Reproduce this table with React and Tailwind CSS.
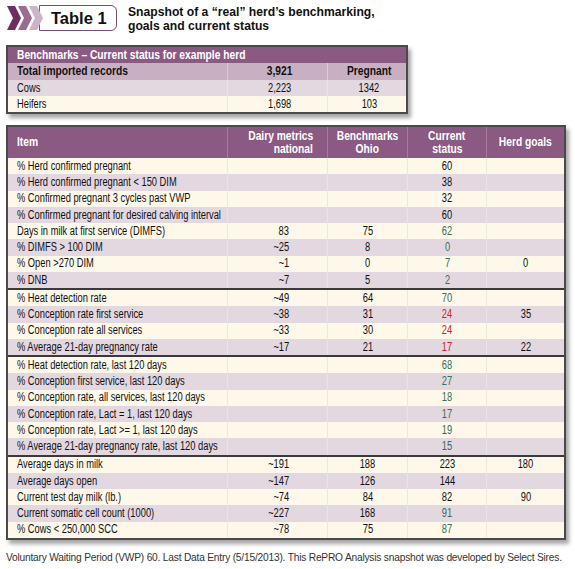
import React from "react";

const F = { fontFamily: '"Liberation Sans", Arial, sans-serif' };

const sections = [
  [
    ["% Herd confirmed pregnant", "", "", ["60", "k"], ""],
    ["% Herd confirmed pregnant < 150 DIM", "", "", ["38", "k"], ""],
    ["% Confirmed pregnant 3 cycles past VWP", "", "", ["32", "k"], ""],
    ["% Confirmed pregnant for desired calving interval", "", "", ["60", "k"], ""],
    ["Days in milk at first service (DIMFS)", "83", "75", ["62", "g"], ""],
    ["% DIMFS > 100 DIM", "~25", "8", ["0", "g"], ""],
    ["% Open >270 DIM", "~1", "0", ["7", "g"], "0"],
    ["% DNB", "~7", "5", ["2", "g"], ""],
  ],
  [
    ["% Heat detection rate", "~49", "64", ["70", "g"], ""],
    ["% Conception rate first service", "~38", "31", ["24", "r"], "35"],
    ["% Conception rate all services", "~33", "30", ["24", "r"], ""],
    ["% Average 21-day pregnancy rate", "~17", "21", ["17", "r"], "22"],
  ],
  [
    ["% Heat detection rate, last 120 days", "", "", ["68", "g"], ""],
    ["% Conception first service, last 120 days", "", "", ["27", "g"], ""],
    ["% Conception rate, all services, last 120 days", "", "", ["18", "g"], ""],
    ["% Conception rate, Lact = 1, last 120 days", "", "", ["17", "g"], ""],
    ["% Conception rate, Lact >= 1, last 120 days", "", "", ["19", "g"], ""],
    ["% Average 21-day pregnancy rate, last 120 days", "", "", ["15", "g"], ""],
  ],
  [
    ["Average days in milk", "~191", "188", ["223", "k"], "180"],
    ["Average days open", "~147", "126", ["144", "k"], ""],
    ["Current test day milk (lb.)", "~74", "84", ["82", "k"], "90"],
    ["Current somatic cell count (1000)", "~227", "168", ["91", "g"], ""],
    ["% Cows < 250,000 SCC", "~78", "75", ["87", "g"], ""],
  ],
];

const colorCls = { k: "text-[#111]", g: "text-[#35705b]", r: "text-[#d2232a]" };

// condensed text helpers (regular / bold)
const NL = ({ children }) => <span className="inline-block whitespace-nowrap origin-left scale-x-[0.745]">{children}</span>;
const NC = ({ children }) => <span className="inline-block whitespace-nowrap origin-center scale-x-[0.745]">{children}</span>;
const NR = ({ children }) => <span className="inline-block whitespace-nowrap origin-right scale-x-[0.745]">{children}</span>;
const BL = ({ children }) => <span className="inline-block whitespace-nowrap origin-left scale-x-[0.82]">{children}</span>;
const BC = ({ children }) => <span className="inline-block whitespace-nowrap origin-center scale-x-[0.82]">{children}</span>;
const BR = ({ children }) => <span className="inline-block whitespace-nowrap origin-right scale-x-[0.82]">{children}</span>;

function Row({ r, i }) {
  const odd = i % 2 === 1;
  const bg = odd ? "bg-[#e3d7e0]" : "bg-[#fdf8ea]";
  const bd = odd ? "border-[#ece3e9]" : "border-[#eee6d6]";
  return (
    <div className={`flex h-[16.25px] text-[12.5px] leading-none text-[#111] ${bg}`}>
      <div className={`w-[220px] pl-[9px] border-r ${bd} flex items-center`}><NL>{r[0]}</NL></div>
      <div className={`w-[100px] pr-[38px] border-r ${bd} flex items-center justify-end`}><NR>{r[1]}</NR></div>
      <div className={`w-[80px] border-r ${bd} flex items-center justify-center`}><NC>{r[2]}</NC></div>
      <div className={`w-[79px] border-r ${bd} flex items-center justify-center ${colorCls[r[3][1]]}`}><NC>{r[3][0]}</NC></div>
      <div className="flex-1 flex items-center justify-center"><NC>{r[4]}</NC></div>
    </div>
  );
}

export default function App() {
  return (
    <div className="w-[575px] h-[569px] bg-white relative overflow-hidden" style={F}>
      {/* Title */}
      <div className="flex items-start pt-[5px] pl-[7px]">
        <div className="flex items-center h-[26px]">
          <svg width="36" height="26" viewBox="0 0 36 26" className="-mr-[4px] relative z-10">
            <polygon points="22,1 30,1 36,13 30,25 22,25 28,13" fill="#cdb3c6" />
            <polygon points="11,1 19,1 25,13 19,25 11,25 17,13" fill="#9b6c91" />
            <polygon points="0,1 8,1 14,13 8,25 0,25 6,13" fill="#6e2c62" />
          </svg>
          <div className="h-[26px] w-[78px] border-[1.5px] border-[#7d4b73] rounded-r-[6px] bg-white flex items-center pl-[11px] font-bold text-[16.5px] text-[#111]">
            Table 1
          </div>
        </div>
        <div className="ml-[11px] font-bold text-[13.5px] text-[#111] flex flex-col">
          <span className="block h-[14px] leading-[14px] whitespace-nowrap origin-left scale-x-[0.9]">Snapshot of a “real” herd’s benchmarking,</span>
          <span className="block h-[14px] leading-[14px] whitespace-nowrap origin-left scale-x-[0.9]">goals and current status</span>
        </div>
      </div>

      {/* Top table */}
      <div className="ml-[6px] mt-[12px] w-[402px] border-2 border-[#4a4a4a] shadow-[3px_4px_4px_rgba(0,0,0,0.35)]">
        <div className="h-[16px] bg-[#8b5a82] text-white font-bold text-[12.5px] leading-none flex items-center pl-[9px]">
          <BL>Benchmarks – Current status for example herd</BL>
        </div>
        <div className="h-[17px] bg-[#c8b0c2] font-bold text-[12.5px] leading-none text-[#111] flex">
          <div className="w-[220px] pl-[9px] flex items-center border-r border-[#dccbd6]"><BL>Total imported records</BL></div>
          <div className="w-[100px] pl-[4px] flex items-center justify-center border-r border-[#dccbd6]"><BC>3,921</BC></div>
          <div className="flex-1 pl-[4px] flex items-center justify-center"><BC>Pregnant</BC></div>
        </div>
        <div className="h-[16px] bg-[#e3d7e0] text-[12.5px] leading-none text-[#111] flex">
          <div className="w-[220px] pl-[9px] flex items-center border-r border-[#ece3e9]"><NL>Cows</NL></div>
          <div className="w-[100px] pl-[4px] flex items-center justify-center border-r border-[#ece3e9]"><NC>2,223</NC></div>
          <div className="flex-1 pl-[4px] flex items-center justify-center"><NC>1342</NC></div>
        </div>
        <div className="h-[16px] bg-[#fdf8ea] text-[12.5px] leading-none text-[#111] flex">
          <div className="w-[220px] pl-[9px] flex items-center border-r border-[#eee6d6]"><NL>Heifers</NL></div>
          <div className="w-[100px] pl-[4px] flex items-center justify-center border-r border-[#eee6d6]"><NC>1,698</NC></div>
          <div className="flex-1 pl-[4px] flex items-center justify-center"><NC>103</NC></div>
        </div>
      </div>

      {/* Main table */}
      <div className="ml-[6px] mt-[11px] w-[560px] border-2 border-[#4a4a4a] shadow-[3px_4px_4px_rgba(0,0,0,0.35)]">
        <div className="h-[31px] bg-[#8b5a82] text-white font-bold text-[12.5px] leading-[13px] flex">
          <div className="w-[220px] pl-[9px] flex items-center border-r border-[#a47d9b]"><BL>Item</BL></div>
          <div className="w-[100px] pr-[14px] flex flex-col items-end justify-center border-r border-[#a47d9b]"><BR>Dairy metrics</BR><BR>national</BR></div>
          <div className="w-[80px] flex flex-col items-center justify-center border-r border-[#a47d9b]"><BC>Benchmarks</BC><BC>Ohio</BC></div>
          <div className="w-[79px] flex flex-col items-center justify-center border-r border-[#a47d9b]"><BC>Current</BC><BC>status</BC></div>
          <div className="flex-1 flex items-center justify-center"><BC>Herd goals</BC></div>
        </div>
        {sections.map((sec, si) => (
          <div key={si} className={si > 0 ? "border-t-2 border-[#3a3a3a]" : ""}>
            {sec.map((r, i) => (
              <Row key={i} r={r} i={i} />
            ))}
          </div>
        ))}
      </div>

      <div className="ml-[6px] mt-[10px] text-[10.2px] tracking-[-0.2px] text-[#333] whitespace-nowrap">
        Voluntary Waiting Period (VWP) 60. Last Data Entry (5/15/2013). This RePRO Analysis snapshot was developed by Select Sires.
      </div>
    </div>
  );
}
